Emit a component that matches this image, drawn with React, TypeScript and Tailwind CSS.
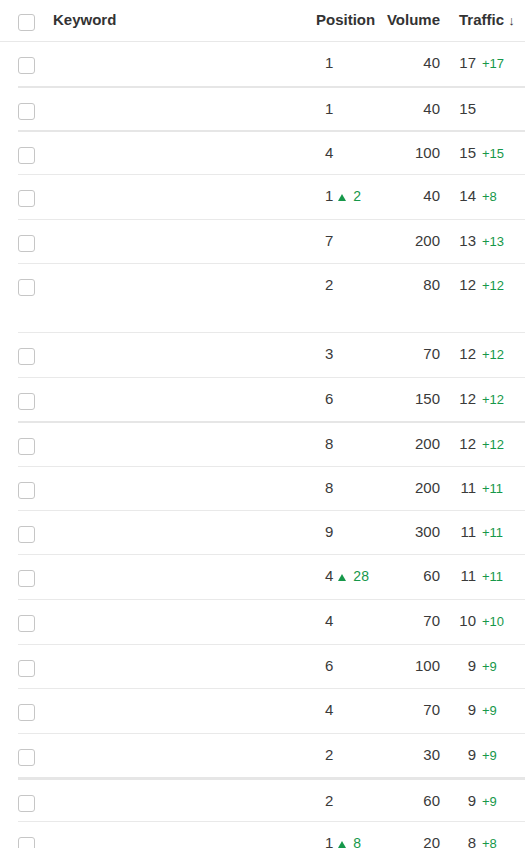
import { useState } from 'react'

interface KeywordRow {
  position: number
  positionDelta?: number
  volume: number
  traffic: number
  trafficDelta?: number
  // divider thickness above the row, and the row's own height
  sep: 'thin' | 'thick' | 'heavy' | 'none'
  height: string
}

const rows: KeywordRow[] = [
  { position: 1, volume: 40, traffic: 17, trafficDelta: 17, sep: 'none', height: 'h-[44px]' },
  { position: 1, volume: 40, traffic: 15, sep: 'thick', height: 'h-[42px]' },
  { position: 4, volume: 100, traffic: 15, trafficDelta: 15, sep: 'thick', height: 'h-[42px]' },
  { position: 1, positionDelta: 2, volume: 40, traffic: 14, trafficDelta: 8, sep: 'thin', height: 'h-[44px]' },
  { position: 7, volume: 200, traffic: 13, trafficDelta: 13, sep: 'thin', height: 'h-[43px]' },
  { position: 2, volume: 80, traffic: 12, trafficDelta: 12, sep: 'thin', height: 'h-[68px]' },
  { position: 3, volume: 70, traffic: 12, trafficDelta: 12, sep: 'thin', height: 'h-[44px]' },
  { position: 6, volume: 150, traffic: 12, trafficDelta: 12, sep: 'thin', height: 'h-[43px]' },
  { position: 8, volume: 200, traffic: 12, trafficDelta: 12, sep: 'thick', height: 'h-[43px]' },
  { position: 8, volume: 200, traffic: 11, trafficDelta: 11, sep: 'thin', height: 'h-[43px]' },
  { position: 9, volume: 300, traffic: 11, trafficDelta: 11, sep: 'thin', height: 'h-[43px]' },
  { position: 4, positionDelta: 28, volume: 60, traffic: 11, trafficDelta: 11, sep: 'thin', height: 'h-[44px]' },
  { position: 4, volume: 70, traffic: 10, trafficDelta: 10, sep: 'thin', height: 'h-[44px]' },
  { position: 6, volume: 100, traffic: 9, trafficDelta: 9, sep: 'thin', height: 'h-[43px]' },
  { position: 4, volume: 70, traffic: 9, trafficDelta: 9, sep: 'thin', height: 'h-[44px]' },
  { position: 2, volume: 30, traffic: 9, trafficDelta: 9, sep: 'thin', height: 'h-[43px]' },
  { position: 2, volume: 60, traffic: 9, trafficDelta: 9, sep: 'heavy', height: 'h-[41px]' },
  { position: 1, positionDelta: 8, volume: 20, traffic: 8, trafficDelta: 8, sep: 'thin', height: 'h-[44px]' },
]

const sepClass = {
  none: 'hidden',
  thin: 'h-px bg-[#e9e9e9]',
  thick: 'h-[2px] bg-[#e6e6e6]',
  heavy: 'h-[3px] bg-[#e6e6e6]',
}

function Checkbox({ checked, onChange }: { checked: boolean; onChange: () => void }) {
  return (
    <button
      onClick={onChange}
      className={
        'block h-[17px] w-[17px] rounded-[3px] border ' +
        (checked ? 'border-[#1a73e8] bg-[#1a73e8]' : 'border-[#c6c6c6] bg-white')
      }
    />
  )
}

function UpTriangle() {
  return (
    <svg width="8" height="7" viewBox="0 0 8 7" className="ml-[5px] mr-[7px] inline-block align-baseline">
      <path d="M4 0 L8 7 L0 7 Z" fill="#16984a" />
    </svg>
  )
}

export default function App() {
  const [checked, setChecked] = useState<Record<number, boolean>>({})

  return (
    <div className="min-h-[848px] bg-white font-['Liberation_Sans',Arial,sans-serif] text-[#3a3a3a]">
      <div className="mr-[5px] flex h-[42px] items-start whitespace-nowrap border-b border-[#e8e8e8] pl-[18px] text-[15px] leading-[18px] font-bold text-[#333]">
        <div className="w-[35px] pt-[14px]">
          <Checkbox checked={false} onChange={() => {}} />
        </div>
        <div className="flex-1 pt-[11px]">Keyword</div>
        <div className="w-[64px] pt-[11px]">Position</div>
        <div className="w-[60px] pt-[11px] text-right">Volume</div>
        <div className="w-[85px] pl-[19px] pt-[11px]">
          Traffic <span className="text-[13px] font-normal">↓</span>
        </div>
      </div>

      {rows.map((row, i) => (
        <div key={i} className="ml-[18px] mr-[5px]">
          <div className={sepClass[row.sep]} />
          <div className={'flex items-start whitespace-nowrap text-[15px] leading-[18px] ' + row.height}>
            <div className="w-[35px] pt-[15px]">
              <Checkbox
                checked={!!checked[i]}
                onChange={() => setChecked({ ...checked, [i]: !checked[i] })}
              />
            </div>
            <div className="flex-1" />
            <div className="w-[64px] pl-[9px] pt-[12px]">
              <span>{row.position}</span>
              {row.positionDelta && (
                <>
                  <UpTriangle />
                  <span className="text-[14px] text-[#16984a]">{row.positionDelta}</span>
                </>
              )}
            </div>
            <div className="w-[60px] pt-[12px] text-right">{row.volume}</div>
            <div className="w-[85px] pl-[19px] pt-[12px]">
              <span className="inline-block w-[17px] text-right">{row.traffic}</span>
              {row.trafficDelta && (
                <span className="ml-[6px] text-[13px] text-[#16984a]">+{row.trafficDelta}</span>
              )}
            </div>
          </div>
        </div>
      ))}
    </div>
  )
}
